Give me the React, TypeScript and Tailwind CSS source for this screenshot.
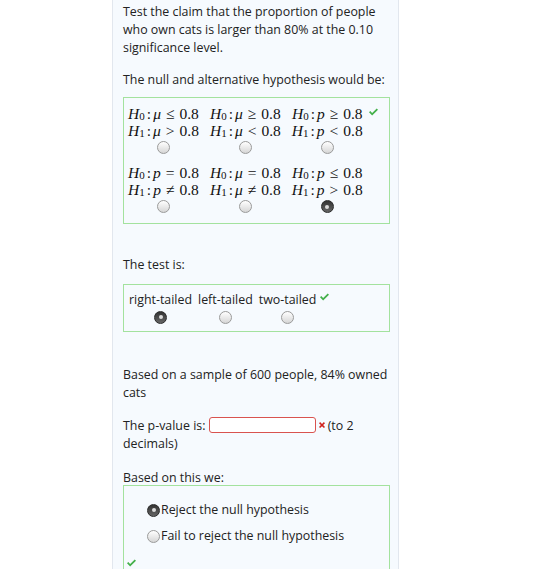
import React from 'react'

const sans = { fontFamily: '"Open Sans", "Liberation Sans", sans-serif' }

function Check({ className = '' }: { className?: string }) {
  return (
    <svg viewBox="0 0 10 8" className={`w-[9px] h-[8px] ${className}`}>
      <path d="M0 4.3 L3.5 7.8 L10 1.4 L8.6 0 L3.5 5 L1.4 2.9 Z" fill="#43b04a" />
    </svg>
  )
}

function Cross() {
  return (
    <svg viewBox="0 0 8 8" className="w-[6px] h-[6px]">
      <path d="M1.5 0 L4 2.5 L6.5 0 L8 1.5 L5.5 4 L8 6.5 L6.5 8 L4 5.5 L1.5 8 L0 6.5 L2.5 4 L0 1.5 Z" fill="#d0211c" />
    </svg>
  )
}

function Radio({ checked = false }: { checked?: boolean }) {
  if (checked) {
    return (
      <span className="w-[13px] h-[13px] rounded-full bg-gradient-to-b from-[#333] to-[#666] border border-[#2a2a2a] flex items-center justify-center shrink-0">
        <span className="w-[4px] h-[4px] rounded-full bg-[#dcdcdc]" />
      </span>
    )
  }
  return (
    <span className="w-[13px] h-[13px] rounded-full bg-gradient-to-b from-white to-[#d6d6d6] border border-[#9a9a9a] shrink-0" />
  )
}

// H_x : sym op 0.8
function Hyp({ n, v, op }: { n: string; v: string; op: string }) {
  return (
    <span className="whitespace-nowrap">
      <i>H</i>
      <sub className="text-[11px] not-italic relative -bottom-[1px]">{n}</sub>
      <span className="mx-[2px]">:</span>
      <i>{v}</i>
      <span className="mx-[5px]">{op}</span>
      0.8
    </span>
  )
}

type Opt = { v0: string; op0: string; v1: string; op1: string; checked?: boolean }

function HypGroup({ opts, mark }: { opts: Opt[]; mark?: boolean }) {
  return (
    <div className="flex gap-[11px]">
      {opts.map((o, i) => (
        <div key={i} className="relative flex flex-col items-center">
          <div className="leading-[17px]">
            <Hyp n="0" v={o.v0} op={o.op0} />
          </div>
          <div className="leading-[17px]">
            <Hyp n="1" v={o.v1} op={o.op1} />
          </div>
          <div className="h-[17px] flex items-center">
            <Radio checked={o.checked} />
          </div>
          {mark && i === opts.length - 1 && <Check className="absolute -right-[15px] top-[3px]" />}
        </div>
      ))}
    </div>
  )
}

export default function App() {
  return (
    <div className="bg-white min-h-[569px] w-[560px]" style={sans}>
      <div className="ml-[112px] w-[287px] min-h-[569px] bg-[#f6fafe] border-x border-[#e2e7ee] pl-[10px] pr-[2px] pt-[3px] text-[12.4px] leading-[18px] text-[#222]">
        <p>Test the claim that the proportion of people who own cats is larger than 80% at the 0.10 significance level.</p>
        <p className="mt-[14px]">The null and alternative hypothesis would be:</p>

        <div
          className="mt-[8px] mr-[6px] border border-[#a3e29e] pl-[4px] pt-[7px] pb-[8px] text-[15.5px] text-[#111]"
          style={{ fontFamily: '"Liberation Serif", "DejaVu Serif", serif' }}
        >
          <HypGroup
            mark
            opts={[
              { v0: 'μ', op0: '≤', v1: 'μ', op1: '>' },
              { v0: 'μ', op0: '≥', v1: 'μ', op1: '<' },
              { v0: 'p', op0: '≥', v1: 'p', op1: '<' },
            ]}
          />
          <div className="mt-[8px]">
            <HypGroup
              opts={[
                { v0: 'p', op0: '=', v1: 'p', op1: '≠' },
                { v0: 'μ', op0: '=', v1: 'μ', op1: '≠' },
                { v0: 'p', op0: '≤', v1: 'p', op1: '>', checked: true },
              ]}
            />
          </div>
        </div>

        <p className="mt-[32px]">The test is:</p>
        <div className="mt-[10px] mr-[6px] border border-[#a3e29e] pl-[5px] pt-[6px] pb-[6px]">
          <div className="flex gap-[6px]">
            {[
              { t: 'right-tailed', c: true },
              { t: 'left-tailed', c: false },
              { t: 'two-tailed', c: false },
            ].map((o, i) => (
              <div key={o.t} className="relative flex flex-col items-center">
                <span className="leading-[18px]">{o.t}</span>
                <div className="h-[16px] flex items-center">
                  <Radio checked={o.c} />
                </div>
                {i === 2 && <Check className="absolute -right-[13px] top-[2px]" />}
              </div>
            ))}
          </div>
        </div>

        <p className="mt-[34px] pr-[4px]">Based on a sample of 600 people, 84% owned cats</p>

        <p className="mt-[15px] pr-[6px]">
          The p-value is:{' '}
          <span className="inline-block align-middle w-[107px] h-[16px] rounded-[3px] border border-[#d9534f] bg-white -mt-[3px]" />
          <span className="inline-block align-middle ml-[3px] mr-[3px] -mt-[3px]">
            <Cross />
          </span>
          (to 2 decimals)
        </p>

        <p className="mt-[16px]">Based on this we:</p>
        <div className="-mt-[2px] mr-[6px] border border-[#a3e29e] pt-[15px] pb-[2px] min-h-[90px]">
          <div className="pl-[23px] flex flex-col gap-[8px]">
            <label className="flex items-center gap-[1px]">
              <Radio checked />
              <span>Reject the null hypothesis</span>
            </label>
            <label className="flex items-center gap-[1px]">
              <Radio />
              <span>Fail to reject the null hypothesis</span>
            </label>
          </div>
          <Check className="ml-[3px] mt-[14px]" />
        </div>
      </div>
    </div>
  )
}
